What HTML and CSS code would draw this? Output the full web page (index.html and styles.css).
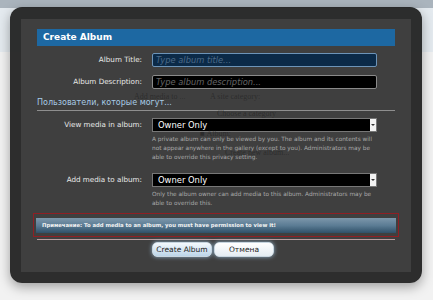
FILE: index.html
```html
<!DOCTYPE html>
<html lang="ru">
  <head>
    <meta charset="utf-8" />
    <title>Create Album</title>
    <link rel="stylesheet" href="styles.css">
  </head>
  <body>
    <div class="overlay">
      <div class="dialog">
        <div class="dialog-inner">
          <h2 class="dialog-title">Create Album</h2>

          <div class="form-row">
            <label class="form-label">Album Title:</label>
            <input class="text-input focused" type="text" placeholder="Type album title...">
          </div>
          <div class="form-row">
            <label class="form-label">Album Description:</label>
            <input class="text-input" type="text" placeholder="Type album description...">
          </div>

          <h3 class="section-heading">Пользователи, которые могут...</h3>

          <div class="form-row perm">
            <label class="form-label">View media in album:</label>
            <div class="field">
              <div class="select-box">Owner Only<span class="select-arrow"></span></div>
              <p class="help">A private album can only be viewed by you. The album and its contents will not appear anywhere in the gallery (except to you). Administrators may be able to override this privacy setting.</p>
            </div>
          </div>
          <div class="form-row perm">
            <label class="form-label">Add media to album:</label>
            <div class="field">
              <div class="select-box">Owner Only<span class="select-arrow"></span></div>
              <p class="help">Only the album owner can add media to this album. Administrators may be able to override this.</p>
            </div>
          </div>

          <div class="note">
            <div class="note-bar">Примечание: To add media to an album, you must have permission to view it!</div>
          </div>

          <div class="buttons">
            <button class="btn primary">Create Album</button>
            <button class="btn">Отмена</button>
          </div>
        </div>
      </div>
      <!-- page content showing through the dialog -->
      <div class="ghost">
        <span class="g1">Add media to ...</span>
        <span class="g2">A site category:</span>
        <span class="g3">Choose a category</span>
        <span class="g4">&#9632; Album:</span>
        <span class="g5">Create new album...</span>
      </div>
    </div>
  </body>
</html>
```

FILE: styles.css
```css
body {
  margin: 0;
  font-family: "DejaVu Sans", Verdana, sans-serif;
  background: linear-gradient(#aab4bd 0, #aab4bd 8px, #e4eaef 8px, #e4eaef 52px, #f2f2f2 52px);
  height: 300px;
  overflow: hidden;
}

.overlay {
  position: relative;
  padding: 7px 11px 0 10px;
}

.dialog {
  width: 412px;
  height: 276px;
  box-sizing: border-box;
  padding: 12px 11px 11px 11px;
  background: rgba(30, 30, 30, 0.93);
  border-radius: 12px;
  box-shadow: 0 4px 12px rgba(0, 0, 0, 0.35);
}

.dialog-inner {
  height: 100%;
  box-sizing: border-box;
  background: #3f3f3f;
  padding: 10px 16px;
}

.dialog-title {
  margin: 0 0 7px;
  height: 17px;
  line-height: 17px;
  padding-left: 6px;
  background: #1d68a2;
  color: #fff;
  font-size: 9px;
  font-weight: bold;
}

.form-row {
  display: flex;
  align-items: flex-start;
  gap: 10px;
  margin-bottom: 8px;
}

.form-label {
  width: 105px;
  flex: none;
  text-align: right;
  color: #e8e8e8;
  font-size: 7.2px;
  line-height: 14px;
}

.text-input {
  width: 225px;
  height: 14px;
  box-sizing: border-box;
  margin: 0;
  padding: 0 3px;
  background: #000;
  border: 1px solid #8a8a8a;
  border-radius: 2px;
  color: #fff;
  font-family: inherit;
  font-size: 8.3px;
  font-style: italic;
}

.text-input::placeholder {
  color: #666;
  font-style: italic;
}

.text-input.focused {
  background: #0b2a48;
  border-color: #6d94b8;
}

.text-input.focused::placeholder {
  color: #4d6a88;
}

.section-heading {
  margin: 7px 0 7px;
  padding-bottom: 1px;
  border-bottom: 1px solid #8e8e8e;
  color: #a8cbe6;
  font-size: 8px;
  font-weight: normal;
  line-height: 12px;
}

.perm {
  margin-bottom: 11px;
}

.perm + .perm {
  margin-bottom: 5px;
}

.field {
  width: 225px;
}

.select-box {
  position: relative;
  height: 14px;
  box-sizing: border-box;
  padding-left: 5px;
  background: #000;
  border: 1px solid #777;
  color: #fff;
  font-size: 8.4px;
  line-height: 12px;
}

.select-arrow {
  position: absolute;
  right: 0;
  top: 0;
  width: 6px;
  height: 12px;
  background: #f2f2f2;
}

.select-arrow::after {
  content: "";
  position: absolute;
  left: 1px;
  top: 5px;
  border-left: 2px solid transparent;
  border-right: 2px solid transparent;
  border-top: 2px solid #333;
}

.help {
  margin: 3px 0 0;
  color: #a9a9a9;
  font-size: 5.8px;
  line-height: 9px;
}

.note {
  margin: 0 -4px 2px;
  padding: 4px 2px 3px;
  border: 1px solid #8f1f24;
}

.note-bar {
  height: 15px;
  line-height: 14px;
  padding-left: 6px;
  background: linear-gradient(#7d97ab, #5b7c94 50%, #2f5068);
  color: #f2f2f2;
  font-size: 5.3px;
  font-weight: bold;
}

.buttons {
  display: flex;
  gap: 2px;
  padding-left: 115px;
  padding-top: 2px;
  border-top: 1px solid #b99c9e;
}

.btn {
  width: 60px;
  height: 15px;
  padding: 0;
  border: 1px solid #c8d6e0;
  border-radius: 5px;
  background: linear-gradient(#ffffff, #e4ecf2);
  box-shadow: 0 0 4px rgba(160, 200, 230, 0.8);
  color: #222;
  font-family: inherit;
  font-size: 7.5px;
}

.btn.primary {
  background: linear-gradient(#f4f9fd, #bcd5e8);
}

.ghost {
  position: absolute;
  top: 0;
  left: 0;
  font-family: "Liberation Serif", serif;
  font-size: 8px;
  color: rgba(20, 20, 20, 0.45);
  pointer-events: none;
}

.ghost span {
  position: absolute;
  white-space: nowrap;
}

.g1 { left: 134px; top: 92px; }
.g2 { left: 210px; top: 92px; }
.g3 { left: 217px; top: 109px; }
.g4 { left: 200px; top: 129px; }
.g5 { left: 225px; top: 148px; }
```
